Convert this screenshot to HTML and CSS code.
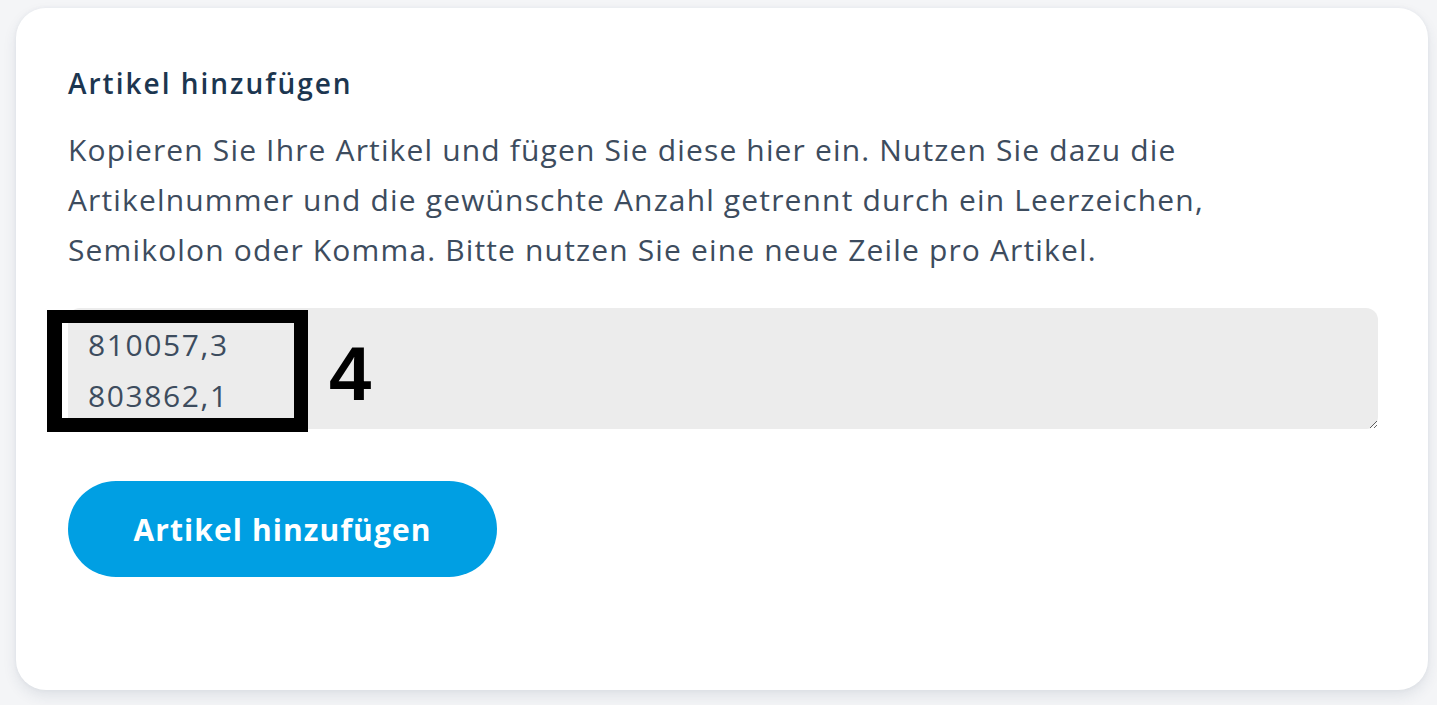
FILE: index.html
```html
<!DOCTYPE html>
<html lang="de">
<head>
<meta charset="utf-8">
<title>Artikel hinzufügen</title>
<link rel="stylesheet" href="styles.css">
</head>
<body>
<div class="card">
  <h2 class="title">Artikel hinzufügen</h2>
  <p class="desc">Kopieren Sie Ihre Artikel und fügen Sie diese hier ein. Nutzen Sie dazu die Artikelnummer und die gewünschte Anzahl getrennt durch ein Leerzeichen, Semikolon oder Komma. Bitte nutzen Sie eine neue Zeile pro Artikel.</p>
  <div class="field">
    <textarea class="input" readonly>810057,3
803862,1</textarea>
    <div class="marker"></div>
    <div class="marker-num">4</div>
  </div>
  <button class="btn" type="button">Artikel hinzufügen</button>
</div>
</body>
</html>
```

FILE: styles.css
```css
html, body {
  margin: 0;
  padding: 0;
}
body {
  background: #f4f5f7;
  font-family: "Open Sans", "Noto Sans", sans-serif;
  height: 705px;
  overflow: hidden;
}
.card {
  margin: 8px 9px 0 16px;
  height: 682px;
  box-sizing: border-box;
  background: #ffffff;
  border-radius: 30px;
  box-shadow: 0 6px 14px rgba(40, 60, 90, 0.10), 0 0 4px rgba(40, 60, 90, 0.05);
  padding: 58px 50px 0 52px;
}
.title {
  margin: 0;
  font-size: 28px;
  line-height: 34px;
  font-weight: 600;
  letter-spacing: 2px;
  color: #1c3650;
}
.desc {
  margin: 25px 0 0;
  font-size: 30px;
  line-height: 50px;
  letter-spacing: 1.15px;
  color: #3d4c5e;
  max-width: 1180px;
}
.field {
  position: relative;
  margin-top: 33px;
}
.input {
  display: block;
  width: 100%;
  height: 121px;
  box-sizing: border-box;
  border: none;
  border-radius: 12px;
  background: #ececec;
  padding: 11px 20px;
  font-family: "Open Sans", "Noto Sans", sans-serif;
  font-size: 30px;
  line-height: 51px;
  letter-spacing: 1.6px;
  color: #3d4c5e;
  outline: none;
  resize: vertical;
}
.marker {
  position: absolute;
  left: -21px;
  top: 2px;
  width: 261px;
  height: 122px;
  box-sizing: border-box;
  border: 14px solid #000;
  border-left-width: 15px;
  border-top-width: 13px;
}
.marker-num {
  position: absolute;
  left: 261px;
  top: 26px;
  font-family: "Liberation Sans", Arial, sans-serif;
  font-weight: 700;
  font-size: 76px;
  line-height: 80px;
  color: #000;
}
.btn {
  display: block;
  margin-top: 52px;
  width: 429px;
  height: 96px;
  border: none;
  border-radius: 48px;
  background: #009fe3;
  color: #ffffff;
  font-family: "Open Sans", "Noto Sans", sans-serif;
  font-size: 30px;
  font-weight: 700;
  letter-spacing: 1.1px;
  padding: 0;
}
```
